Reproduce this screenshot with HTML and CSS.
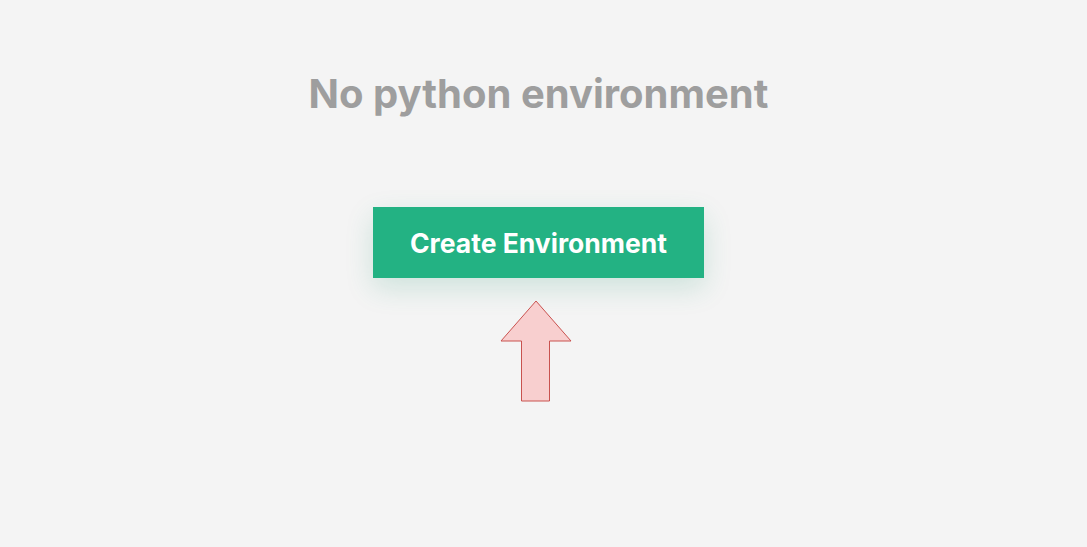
FILE: index.html
```html
<!DOCTYPE html>
<html>
<head>
<meta charset="utf-8">
<link rel="stylesheet" href="styles.css">
</head>
<body>
<main class="page">
  <h1 class="title">No python environment</h1>
  <button class="create-btn">Create Environment</button>
  <svg class="arrow" width="72" height="102" viewBox="0 0 72 102">
    <polygon points="36,1 71,41 49.5,41 49.5,101 21.5,101 21.5,41 1,41" fill="#f8cfcf" stroke="#c9524f" stroke-width="1"/>
  </svg>
</main>
</body>
</html>
```
FILE: styles.css
```css
html, body {
  margin: 0;
  padding: 0;
  background: #f4f4f4;
  height: 100%;
}
.page {
  display: flex;
  flex-direction: column;
  align-items: center;
  padding-top: 67px;
  padding-right: 10px;
  font-family: Inter, "Noto Sans", sans-serif;
}
.title {
  margin: 0;
  font-size: 40px;
  font-weight: 700;
  color: #9e9e9e;
  line-height: 54px;
}
.create-btn {
  margin-top: 86px;
  width: 331px;
  height: 71px;
  border: none;
  background: #23b283;
  color: #ffffff;
  font-family: Inter, "Noto Sans", sans-serif;
  font-size: 26.5px;
  font-weight: 700;
  box-shadow: 0 10px 28px rgba(35, 150, 110, 0.18);
  cursor: pointer;
}
.arrow {
  margin-top: 22px;
  margin-right: 5px;
  display: block;
}
```
